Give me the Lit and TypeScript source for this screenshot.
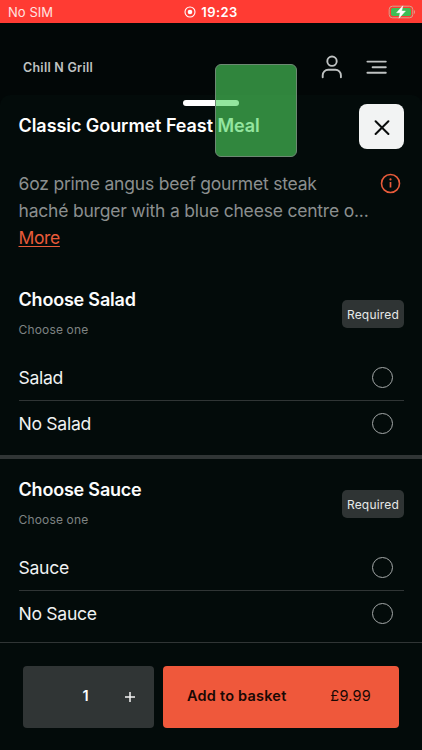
import { LitElement, html, css } from "lit";
import { customElement, property } from "lit/decorators.js";

@customElement("option-group")
class OptionGroup extends LitElement {
  @property() heading = "";
  @property({ attribute: false }) options: string[] = [];

  static styles = css`
    :host { display: block; height: 186px; flex: none; padding: 0 18px 0 18.5px; }
    .head { display: flex; justify-content: space-between; box-sizing: border-box; height: 86px; padding-top: 31px; }
    .titles { white-space: nowrap; }
    .heading { font-size: 18px; font-weight: 600; line-height: 24px; color: #fbfcfc; letter-spacing: -0.2px; margin-top: -12px; }
    .hint { font-size: 12px; line-height: 18px; color: #7e8383; letter-spacing: 0.16px; margin-top: 9px; }
    .badge { box-sizing: border-box; width: 62px; height: 28px; border-radius: 5px; background: #2f3434; color: #e6e8e8; font-size: 12px; line-height: 29px; text-align: center; letter-spacing: 0.2px; }
    .row { display: flex; align-items: center; justify-content: space-between; height: 45px; padding-right: 11px; border-bottom: 1px solid #303535; font-size: 17.6px; color: #f0f2f2; letter-spacing: -0.3px; }
    .row:last-child { border-bottom: 0; }
    .ring { box-sizing: border-box; width: 21px; height: 21px; border: 1px solid #a4a8a8; border-radius: 50%; }
  `;

  render() {
    return html`
      <div class="head">
        <div class="titles">
          <div class="heading">${this.heading}</div>
          <div class="hint">Choose one</div>
        </div>
        <div class="badge">Required</div>
      </div>
      ${this.options.map(
        (o) => html`<div class="row"><span>${o}</span><span class="ring"></span></div>`
      )}
    `;
  }
}

@customElement("app-root")
class AppRoot extends LitElement {
  static styles = css`
    :host { display: flex; flex-direction: column; position: relative; width: 422px; height: 750px; overflow: hidden; background: #020707; font-family: Inter, "Liberation Sans", sans-serif; color: #fff; }
    svg { display: block; flex: none; }
    .status { display: grid; grid-template-columns: 1fr auto 1fr; align-items: center; height: 23px; flex: none; background: #ff3b33; padding: 0 8px; color: #fff; }
    .carrier { font-size: 13px; line-height: 23px; padding-top: 1px; color: #ffe3e0; letter-spacing: 0.05px; }
    .clock { display: flex; align-items: center; gap: 5px; font-size: 13px; font-weight: 600; letter-spacing: 0.4px; }
    .battery { justify-self: end; margin-right: -2px; }
    .bar { display: flex; align-items: center; height: 72px; flex: none; box-sizing: border-box; padding: 16px 35px 0 23px; color: #bfc2c2; }
    .brand { flex: 1; font-size: 12.5px; font-weight: 600; letter-spacing: 0.25px; }
    .person { margin-right: 23px; }
    .sheet { flex: 1; min-height: 0; overflow: hidden; border-radius: 10px 10px 0 0; background: #030b0a; display: flex; flex-direction: column; }
    .grip { width: 56px; height: 6px; margin: 5px 0 0 183px; border-radius: 3px; background: #fff; flex: none; }
    .title-row { display: flex; align-items: center; justify-content: space-between; height: 45px; margin: -2px 18px 0 18.5px; flex: none; }
    .title { font-size: 18px; font-weight: 600; line-height: 24px; margin-bottom: 1px; white-space: nowrap; letter-spacing: -0.06px; }
    .close { width: 45px; height: 45px; border-radius: 8px; background: #f2f3f3; display: grid; place-items: center; }
    .about { display: flex; justify-content: space-between; height: 82px; margin: 21px 21px 0 18.5px; flex: none; }
    .text { font-size: 17.5px; line-height: 27px; color: #8b8f8f; white-space: nowrap; letter-spacing: -0.2px; }
    .more { color: #e85b3a; letter-spacing: -0.35px; text-decoration: underline; text-decoration-thickness: 1px; text-underline-offset: 2px; }
    .info { margin-top: 3px; }
    .first { margin-top: 17px; }
    .rule { height: 4px; background: #303535; flex: none; }
    .footer { box-sizing: border-box; height: 108px; flex: none; border-top: 1px solid #303535; background: #030b0a; display: flex; gap: 9px; padding: 22.5px 23px 0; }
    .qty { width: 131px; height: 62px; border-radius: 4px; background: #303535; display: flex; align-items: center; box-sizing: border-box; padding: 0 18px 0 59.5px; justify-content: space-between; font-size: 14.5px; font-weight: 600; }
    .add { flex: 1; height: 62px; border-radius: 4px; background: #ef583b; display: flex; align-items: center; justify-content: space-between; box-sizing: border-box; padding: 0 28px 0 24px; color: #190804; font-size: 14.5px; font-weight: 600; letter-spacing: 0.22px; white-space: nowrap; }
    .count, .label, .price { padding-bottom: 2px; }
    .price { font-weight: 400; }
    .tile { position: absolute; left: 215px; top: 64px; width: 82px; height: 93px; box-sizing: border-box; border: 1px solid #6d8973; border-radius: 6px; background: rgba(78, 214, 97, 0.61); }
  `;

  render() {
    return html`
      <div class="status">
        <span class="carrier">No SIM</span>
        <span class="clock">
          <svg width="12" height="12" viewBox="0 0 12 12"><circle cx="6" cy="6" r="5" fill="none" stroke="#fff" stroke-width="1.1" /><circle cx="6" cy="6" r="2.3" fill="#fff" /></svg>
          19:23
        </span>
        <svg class="battery" width="28" height="14" viewBox="0 0 28 14">
          <rect x="1.2" y="1.2" width="23.6" height="11.6" rx="3.3" fill="none" stroke="#d7a18c" stroke-width="1" />
          <rect x="3" y="3" width="20" height="8" rx="1.8" fill="#3ebd55" />
          <path d="M26 5v4c1.4-.7 1.4-3.3 0-4z" fill="#e79a88" />
          <path d="M14.8.8 8.6 7.7h3.6L11 13.2l6.4-7.1h-3.7z" fill="#fff" stroke="#fff" stroke-width=".5" />
        </svg>
      </div>
      <div class="bar">
        <span class="brand">Chill N Grill</span>
        <svg class="person" width="22" height="24" viewBox="0 0 22 24" fill="none" stroke="currentColor" stroke-width="1.9" stroke-linecap="round"><circle cx="11" cy="6.2" r="4.7" /><path d="M1.7 22.3v-2a5.5 5.5 0 0 1 5.5-5.5h7.2a5.5 5.5 0 0 1 5.5 5.5v2" /></svg>
        <svg width="21" height="16" viewBox="0 0 21 16" fill="none" stroke="currentColor" stroke-width="1.9" stroke-linecap="round"><path d="M1.4 2.6h18.4M6.6 8.2h13.2M1.4 13.7h18.4" /></svg>
      </div>
      <div class="sheet">
        <div class="grip"></div>
        <div class="title-row">
          <span class="title">Classic Gourmet Feast Meal</span>
          <span class="close"><svg width="16" height="16" viewBox="0 0 16 16" stroke="#0b0d0d" stroke-width="2" stroke-linecap="round"><path d="M1.6 2.2l12.8 12.8M14.4 2.2 1.6 15" /></svg></span>
        </div>
        <div class="about">
          <div class="text">6oz prime angus beef gourmet steak<br />haché burger with a blue cheese centre o...<br /><span class="more">More</span></div>
          <svg class="info" width="21" height="21" viewBox="0 0 21 21"><circle cx="10.5" cy="10.5" r="9" fill="none" stroke="#e85b3a" stroke-width="1.6" /><path d="M10.5 9v5.6" stroke="#e85b3a" stroke-width="1.7" /><circle cx="10.5" cy="6.4" r="1.1" fill="#e85b3a" /></svg>
        </div>
        <option-group class="first" heading="Choose Salad" .options=${["Salad", "No Salad"]}></option-group>
        <div class="rule"></div>
        <option-group heading="Choose Sauce" .options=${["Sauce", "No Sauce"]}></option-group>
      </div>
      <div class="footer">
        <div class="qty"><span class="count">1</span><svg width="12" height="12" viewBox="0 0 12 12" stroke="#f3f4f4" stroke-width="1.5"><path d="M1 6h10M6 1v10" /></svg></div>
        <div class="add"><span class="label">Add to basket</span><span class="price">£9.99</span></div>
      </div>
      <div class="tile"></div>
    `;
  }
}
